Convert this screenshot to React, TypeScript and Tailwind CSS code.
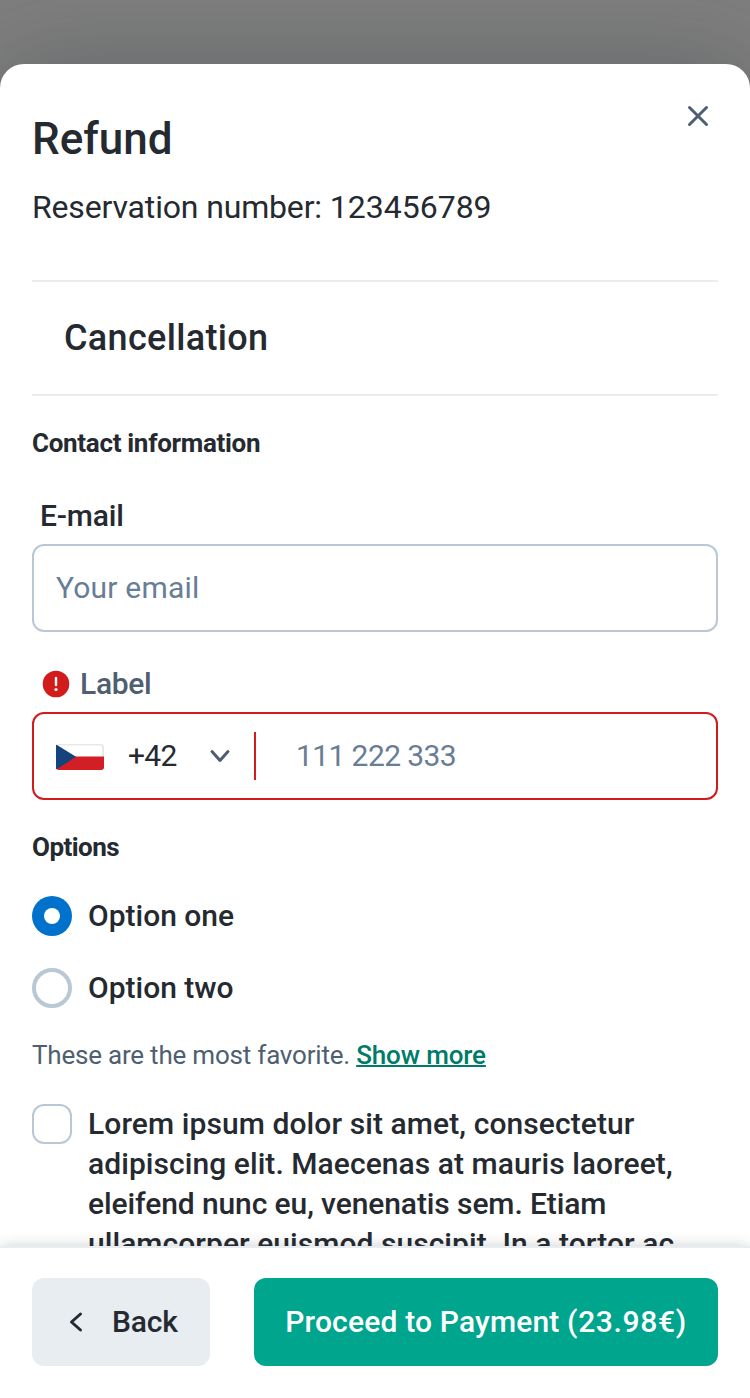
import React from "react";

function Heading({ children }: { children: React.ReactNode }) {
  return <h3 className="text-[26px] leading-[40px] font-bold">{children}</h3>;
}

export default function App() {
  return (
    <div className="flex h-[1398px] w-[750px] flex-col overflow-hidden bg-[#7f7f7f] pt-16 font-[Roboto,sans-serif] text-[#252a31]">
      <main className="min-h-0 flex-1 overflow-hidden rounded-t-[24px] bg-white px-8 shadow-[0_0_96px_rgba(37,42,49,0.3)]">
        <header className="flex h-[216px] justify-between pt-8">
          <div className="pt-[19px]">
            <h1 className="text-[44px] leading-[48px] font-medium">Refund</h1>
            <p className="mt-5 text-[32px] leading-[48px]"><span className="tracking-[-0.16px]">Reservation number: </span><span>123456789</span></p>
          </div>
          <button aria-label="Close" className="flex size-10 items-center justify-center">
            <svg viewBox="0 0 40 40" className="size-10" fill="none" stroke="#4f5e71" strokeWidth="3" strokeLinecap="round"><path d="M11.5 11.5l17 17M28.5 11.5l-17 17" /></svg>
          </button>
        </header>
        <h2 className="flex h-[116px] items-center border-y-2 border-[#e8edf1] px-8 text-[36px] font-medium tracking-[0.33px]">Cancellation</h2>
        <section className="pt-[27px]">
          <Heading><span className="tracking-[-0.31px]">Contact information</span></Heading>
          <label className="mt-[33px] ml-2 block text-[30px] leading-[40px] font-medium tracking-[-0.15px]">E-mail</label>
          <div className="mt-2 flex h-[88px] items-center rounded-[12px] border-2 border-[#bac7d5] px-[22px] pb-0.5 text-[30px] tracking-[0.2px] text-[#697d95]">Your email</div>
          <div className="mt-8 ml-2 flex h-10 items-center gap-2 text-[30px] font-medium text-[#4f5e71]">
            <svg viewBox="0 0 32 32" className="size-8"><circle cx="16" cy="16" r="13.3" fill="#d21c1c" /><path d="M16 10v7" stroke="white" strokeWidth="2.4" strokeLinecap="round" /><circle cx="16" cy="21.5" r="1.6" fill="white" /></svg>
            <span className="pb-0.5 tracking-[-0.3px]">Label</span>
          </div>
          <div className="mt-2 flex h-[88px] items-center rounded-[12px] border-2 border-[#d21c1c] pl-[22px] text-[30px]">
            <svg viewBox="0 0 48 26" className="mt-0.5 h-[26px] w-12"><rect width="48" height="26" rx="3" fill="#e8e8e8" /><path d="M0 1.5h44a2.2 2.2 0 012.2 2.2V13H0z" fill="#fff" /><path d="M0 12.5h48V23a3 3 0 01-3 3H3a3 3 0 01-3-3z" fill="#d21f26" /><path d="M0 1.5Q0 .5 1 1L20 12.8 1 25Q0 25.5 0 24z" fill="#17437d" /></svg>
            <span className="ml-6 w-[50px] overflow-hidden pb-0.5 tracking-[-0.7px] whitespace-nowrap">+42</span>
            <svg viewBox="0 0 40 40" className="ml-[22px] size-10" fill="none" stroke="#4f5e71" strokeWidth="3" strokeLinecap="round" strokeLinejoin="round"><path d="M12 15.5l8 9 8-9" /></svg>
            <span className="ml-[14px] h-12 w-0.5 bg-[#d21c1c]" />
            <span className="ml-10 pb-0.5 tracking-[-0.6px] text-[#697d95]">111 222 333</span>
          </div>
        </section>
        <section className="pt-[27px]">
          <Heading><span className="tracking-[-0.55px]">Options</span></Heading>
          <div className="mt-[29px] flex h-10 items-center gap-4 text-[30px] font-medium"><span className="flex size-10 items-center justify-center rounded-full bg-[#0172cb]"><i className="size-4 rounded-full bg-white" /></span><span className="pb-0.5">Option one</span></div>
          <div className="mt-8 flex h-10 items-center gap-4 text-[30px] font-medium"><span className="size-10 rounded-full border-4 border-[#bac7d5]" /><span className="pb-0.5">Option two</span></div>
          <p className="mt-[27px] text-[26px] leading-[40px] tracking-[-0.21px] text-[#4f5e71]">These are the most favorite. <a className="font-medium tracking-[-0.14px] text-[#007a69] underline decoration-2">Show more</a></p>
        </section>
        <div className="mt-[29px] flex gap-4 text-[30px] leading-[40px] font-medium">
          <span className="size-10 shrink-0 rounded-[12px] border-2 border-[#bac7d5]" />
          <p className="whitespace-nowrap"><span className="tracking-[0.09px]">Lorem ipsum dolor sit amet, consectetur</span><br /><span className="tracking-[0.06px]">adipiscing elit. Maecenas at mauris laoreet,</span><br /><span className="tracking-[-0.1px]">eleifend nunc eu, venenatis sem. Etiam</span><br /><span className="tracking-[0.05px]">ullamcorper euismod suscipit. In a tortor ac</span></p>
        </div>
      </main>
      <footer className="z-10 flex h-[152px] shrink-0 justify-between border-t-2 border-[#e8edf1] bg-white px-8 pt-[30px] shadow-[0_0_14px_-2px_rgba(37,42,49,0.3)]">
        <button className="flex h-[88px] w-[178px] items-center rounded-[12px] bg-[#e8edf1] pl-6 text-[30px] font-medium">
          <svg viewBox="0 0 40 40" className="size-10" fill="none" stroke="#252a31" strokeWidth="3" strokeLinecap="round" strokeLinejoin="round"><path d="M24.5 12l-9 8 9 8" /></svg><span className="ml-4 pb-0.5 tracking-[-0.15px]">Back</span>
        </button>
        <button className="h-[88px] w-[464px] rounded-[12px] bg-[#00a58e] pb-0.5 text-[30px] font-medium tracking-[0.17px] text-white">Proceed to Payment <span className="tracking-[0.65px]">(23.98€)</span></button>
      </footer>
    </div>
  );
}
